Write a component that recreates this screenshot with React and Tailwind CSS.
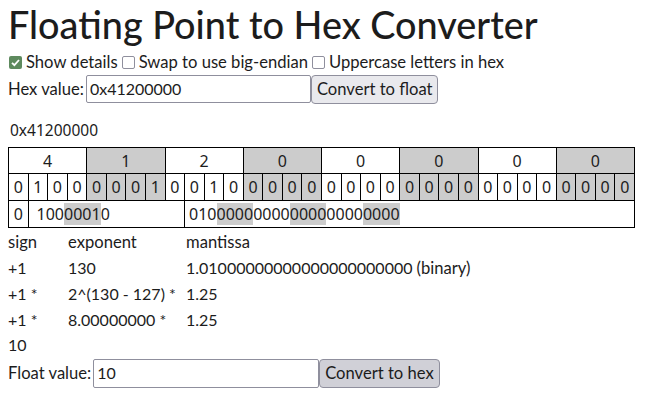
import React from "react";

const bits = "01000001001000000000000000000000".split("");
const hex = ["4", "1", "2", "0", "0", "0", "0", "0"];

// gray for odd nibbles
const shade = (i) => (Math.floor(i / 4) % 2 === 1 ? "bg-[#cccccc]" : "bg-white");

const Check = ({ checked }) =>
  checked ? (
    <span className="inline-flex w-[13px] h-[13px] rounded-[2px] bg-[#5e8a5e] items-center justify-center ml-px mr-[4px]">
      <svg width="11" height="11" viewBox="0 0 11 11">
        <path d="M2 5.8 L4.4 8.2 L9 3" fill="none" stroke="white" strokeWidth="1.8" />
      </svg>
    </span>
  ) : (
    <span className="inline-block w-[13px] h-[13px] rounded-[2px] border border-[#8f8f9d] bg-white ml-[4px] mr-[4px]" />
  );

const Bits = ({ from, to }) => {
  const out = [];
  let i = from;
  while (i <= to) {
    const g = Math.floor(i / 4);
    let j = i;
    let s = "";
    while (j <= to && Math.floor(j / 4) === g) {
      s += bits[j];
      j++;
    }
    out.push(
      <span key={i} className={g % 2 === 1 ? "bg-[#cccccc]" : ""}>
        {s}
      </span>
    );
    i = j;
  }
  return out;
};

export default function App() {
  return (
    <div className="px-2 text-[16px] text-[#1c1c1c] font-['Lato','Open_Sans',sans-serif]">
      <h1 className="h-[50px] pt-[2px] text-[37.8px] leading-[46px] font-medium m-0">
        Floating Point to Hex Converter
      </h1>

      <div className="h-[24px] flex items-center text-[16.6px]">
        <Check checked />
        <span>Show details</span>
        <Check />
        <span>Swap to use big-endian</span>
        <Check />
        <span>Uppercase letters in hex</span>
      </div>

      <div className="h-[28px] mt-px flex items-center">
        <span className="mr-[2px] text-[16.6px]">Hex value:</span>
        <div className="w-[225px] h-[28px] border border-[#8f8f9d] rounded-[2px] px-[3px] flex items-center bg-white">
          0x41200000
        </div>
        <button className="h-[29px] px-[5px] border border-[#8f8f9d] rounded-[4px] bg-[#e9e9ed] text-[16.6px]">
          Convert to float
        </button>
      </div>

      <div className="mt-[18px] h-[20px] flex items-center font-['Noto_Sans',sans-serif] text-[15.5px] pl-[2px]">
        0x41200000
      </div>

      <table className="mt-[6px] w-[627px] border-collapse table-fixed font-['Noto_Sans',sans-serif] text-[16px]">
        <tbody>
          <tr className="h-[26px]">
            {hex.map((h, i) => (
              <td
                key={i}
                colSpan={4}
                className={`border border-black text-center p-0 ${i % 2 ? "bg-[#cccccc]" : "bg-white"}`}
              >
                {h}
              </td>
            ))}
          </tr>
          <tr className="h-[27px]">
            {bits.map((b, i) => (
              <td key={i} className={`border border-black text-center p-0 ${shade(i)}`}>
                {b}
              </td>
            ))}
          </tr>
          <tr className="h-[27px]">
            <td className="border border-black text-center p-0">0</td>
            <td colSpan={8} className="border border-black px-[8px] py-0">
              <Bits from={1} to={8} />
            </td>
            <td colSpan={23} className="border border-black px-[4px] py-0">
              <Bits from={9} to={31} />
            </td>
          </tr>
        </tbody>
      </table>

      <div className="mt-[2px] grid grid-cols-[60px_118px_1fr] auto-rows-[25.6px] items-center">
        <span className="text-[16.6px]">sign</span>
        <span className="text-[16.6px]">exponent</span>
        <span className="text-[16.6px]">mantissa</span>
        <span>+1</span>
        <span>130</span>
        <span>
          1.01000000000000000000000 <span className="text-[16.6px]">(binary)</span>
        </span>
        <span>+1 *</span>
        <span>2^(130 - 127) *</span>
        <span>1.25</span>
        <span>+1 *</span>
        <span>8.00000000 *</span>
        <span>1.25</span>
        <span>10</span>
      </div>

      <div className="h-[29px] mt-px flex items-center">
        <span className="mr-[2px] text-[16.6px]">Float value:</span>
        <div className="w-[226px] h-[29px] border border-[#8f8f9d] rounded-[2px] px-[3px] flex items-center bg-white">
          10
        </div>
        <button className="h-[29px] px-[5px] border border-[#8f8f9d] rounded-[4px] bg-[#d0d0d7] text-[16.6px]">
          Convert to hex
        </button>
      </div>
    </div>
  );
}
